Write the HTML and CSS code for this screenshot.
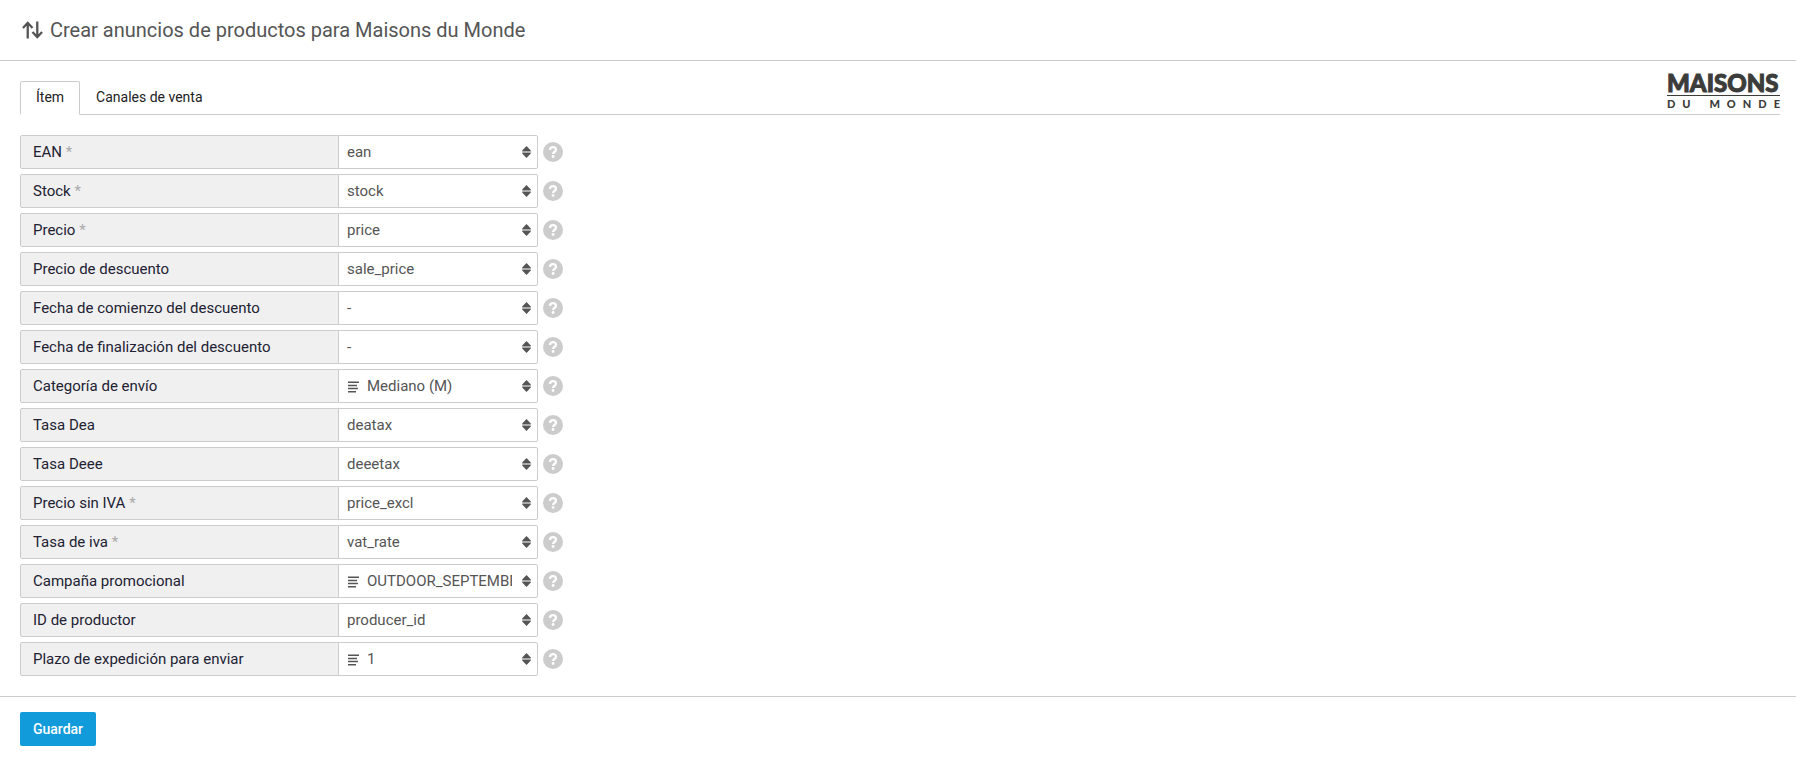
FILE: index.html
```html
<!DOCTYPE html>
<html lang="es">
<head>
    <meta charset="UTF-8">
    <meta name="viewport" content="width=device-width, initial-scale=1.0">
    <title>Crear anuncios de productos</title>
    <link rel="stylesheet" href="styles.css">
</head>
<body>

<!-- Shared icons -->
<svg class="sprite" aria-hidden="true">
    <symbol id="icon-sort" viewBox="0 0 9 12">
        <path d="M4.5 0 8.8 4.5V5.4H.2V4.5zM4.5 12 8.8 7.5V6.6H.2V7.5z"/>
    </symbol>
    <symbol id="icon-text" viewBox="0 0 12 12">
        <path d="M0 .6h11v1.5H0zM0 3.7h9v1.5H0zM0 6.8h10v1.5H0zM0 9.9h8v1.5H0z"/>
    </symbol>
    <symbol id="icon-help" viewBox="0 0 20 20">
        <circle cx="10" cy="10" r="10" fill="#ccc"/>
        <path d="M7 7.9C7 6.2 8.2 5.2 10 5.2s2.9 1 2.9 2.5c0 1.1-.6 1.6-1.5 2.3-.9.7-1.3 1-1.3 2.1" fill="none" stroke="#fff" stroke-width="2.3"/>
        <circle cx="10.1" cy="14.5" r="1.4" fill="#fff"/>
    </symbol>
</svg>

<header class="page-header">
    <svg class="header-icon" viewBox="0 0 22 20">
        <path d="M6 19V3M1 8l5-5.5L11 8M16 1v16M11 12l5 5.5L21 12" fill="none" stroke="#555" stroke-width="2.4"/>
    </svg>
    <h1>Crear anuncios de productos para Maisons du Monde</h1>
</header>

<main>
    <nav class="tabs">
        <a class="tab active" href="#item">Ítem</a>
        <a class="tab" href="#canales">Canales de venta</a>
        <div class="brand">
            <div class="brand-top">MAISONS</div>
            <div class="brand-bottom"><span>DU</span> <span>MONDE</span></div>
        </div>
    </nav>

    <form id="listing-form">
        <div class="field">
            <label for="ean">EAN <span class="required">*</span></label>
            <div class="select-box">
                <select id="ean"><option>ean</option></select>
                <svg class="sort"><use href="#icon-sort"/></svg>
            </div>
            <svg class="help"><use href="#icon-help"/></svg>
        </div>
        <div class="field">
            <label for="stock">Stock <span class="required">*</span></label>
            <div class="select-box">
                <select id="stock"><option>stock</option></select>
                <svg class="sort"><use href="#icon-sort"/></svg>
            </div>
            <svg class="help"><use href="#icon-help"/></svg>
        </div>
        <div class="field">
            <label for="price">Precio <span class="required">*</span></label>
            <div class="select-box">
                <select id="price"><option>price</option></select>
                <svg class="sort"><use href="#icon-sort"/></svg>
            </div>
            <svg class="help"><use href="#icon-help"/></svg>
        </div>
        <div class="field">
            <label for="sale-price">Precio de descuento</label>
            <div class="select-box">
                <select id="sale-price"><option>sale_price</option></select>
                <svg class="sort"><use href="#icon-sort"/></svg>
            </div>
            <svg class="help"><use href="#icon-help"/></svg>
        </div>
        <div class="field">
            <label for="sale-start">Fecha de comienzo del descuento</label>
            <div class="select-box">
                <select id="sale-start"><option>-</option></select>
                <svg class="sort"><use href="#icon-sort"/></svg>
            </div>
            <svg class="help"><use href="#icon-help"/></svg>
        </div>
        <div class="field">
            <label for="sale-end">Fecha de finalización del descuento</label>
            <div class="select-box">
                <select id="sale-end"><option>-</option></select>
                <svg class="sort"><use href="#icon-sort"/></svg>
            </div>
            <svg class="help"><use href="#icon-help"/></svg>
        </div>
        <div class="field">
            <label for="shipping">Categoría de envío</label>
            <div class="select-box fixed-value">
                <svg class="text-icon"><use href="#icon-text"/></svg>
                <select id="shipping"><option>Mediano (M)</option></select>
                <svg class="sort"><use href="#icon-sort"/></svg>
            </div>
            <svg class="help"><use href="#icon-help"/></svg>
        </div>
        <div class="field">
            <label for="deatax">Tasa Dea</label>
            <div class="select-box">
                <select id="deatax"><option>deatax</option></select>
                <svg class="sort"><use href="#icon-sort"/></svg>
            </div>
            <svg class="help"><use href="#icon-help"/></svg>
        </div>
        <div class="field">
            <label for="deeetax">Tasa Deee</label>
            <div class="select-box">
                <select id="deeetax"><option>deeetax</option></select>
                <svg class="sort"><use href="#icon-sort"/></svg>
            </div>
            <svg class="help"><use href="#icon-help"/></svg>
        </div>
        <div class="field">
            <label for="price-excl">Precio sin IVA <span class="required">*</span></label>
            <div class="select-box">
                <select id="price-excl"><option>price_excl</option></select>
                <svg class="sort"><use href="#icon-sort"/></svg>
            </div>
            <svg class="help"><use href="#icon-help"/></svg>
        </div>
        <div class="field">
            <label for="vat-rate">Tasa de iva <span class="required">*</span></label>
            <div class="select-box">
                <select id="vat-rate"><option>vat_rate</option></select>
                <svg class="sort"><use href="#icon-sort"/></svg>
            </div>
            <svg class="help"><use href="#icon-help"/></svg>
        </div>
        <div class="field">
            <label for="campaign">Campaña promocional</label>
            <div class="select-box fixed-value">
                <svg class="text-icon"><use href="#icon-text"/></svg>
                <select id="campaign"><option>OUTDOOR_SEPTEMBER</option></select>
                <svg class="sort"><use href="#icon-sort"/></svg>
            </div>
            <svg class="help"><use href="#icon-help"/></svg>
        </div>
        <div class="field">
            <label for="producer">ID de productor</label>
            <div class="select-box">
                <select id="producer"><option>producer_id</option></select>
                <svg class="sort"><use href="#icon-sort"/></svg>
            </div>
            <svg class="help"><use href="#icon-help"/></svg>
        </div>
        <div class="field">
            <label for="lead-time">Plazo de expedición para enviar</label>
            <div class="select-box fixed-value">
                <svg class="text-icon"><use href="#icon-text"/></svg>
                <select id="lead-time"><option>1</option></select>
                <svg class="sort"><use href="#icon-sort"/></svg>
            </div>
            <svg class="help"><use href="#icon-help"/></svg>
        </div>
    </form>
</main>

<footer>
    <button type="submit" form="listing-form">Guardar</button>
</footer>

</body>
</html>
```
FILE: styles.css
```css
* {
    box-sizing: border-box;
}

body {
    margin: 0;
    font-family: Roboto, sans-serif;
    font-size: 15px;
    color: #223;
    background-color: #fff;
}

.sprite {
    display: none;
}

.page-header {
    display: flex;
    align-items: center;
    gap: 7px;
    height: 61px;
    padding: 0 22px;
    border-bottom: 1px solid #ccc;
}

.header-icon {
    width: 21px;
    height: 20px;
}

.page-header h1 {
    margin: 0;
    font-size: 20px;
    font-weight: 400;
    color: #555;
}

main {
    padding: 0 16px 15px 20px;
}

.tabs {
    display: flex;
    align-items: flex-end;
    height: 54px;
    margin-bottom: 20px;
    border-bottom: 1px solid #ccc;
}

.tab {
    height: 34px;
    margin-bottom: -1px;
    padding: 0 15px;
    border: 1px solid transparent;
    border-radius: 2px 2px 0 0;
    font-size: 14px;
    line-height: 30px;
    color: #222;
    text-decoration: none;
}

.tab.active {
    border-color: #ccc;
    border-bottom-color: #fff;
    background-color: #fff;
}

/* Marketplace logo */
.brand {
    width: 113px;
    margin-left: auto;
    margin-bottom: 3px;
    font-family: Lato, sans-serif;
    font-weight: 900;
    color: #3c3c3b;
    -webkit-text-stroke: 1px #3c3c3b;
}

.brand-top {
    height: 24px;
    border-bottom: 1px solid #3c3c3b;
    font-size: 24px;
    line-height: 22px;
}

.brand-bottom {
    display: flex;
    justify-content: space-between;
    font-size: 11px;
    line-height: 15px;
    letter-spacing: 7px;
    -webkit-text-stroke-width: 0;
}

.brand-bottom span:last-child {
    margin-right: -7px;
}

.field {
    display: flex;
    align-items: center;
    margin-bottom: 5px;
}

.field label {
    width: 319px;
    height: 34px;
    padding: 0 12px;
    border: 1px solid #ccc;
    border-radius: 2px 0 0 2px;
    background-color: #f0f0f0;
    line-height: 32px;
}

.required {
    color: #aaa;
}

.select-box {
    position: relative;
    width: 200px;
    height: 34px;
    margin-left: -1px;
}

.select-box select {
    width: 100%;
    height: 34px;
    padding: 0 25px 0 8px;
    border: 1px solid #ccc;
    border-radius: 0 2px 2px 0;
    background-color: #fff;
    font-family: inherit;
    font-size: 15px;
    color: #555;
    appearance: none;
}

.select-box.fixed-value select {
    padding-left: 28px;
}

.sort {
    position: absolute;
    top: 11px;
    right: 7px;
    width: 9px;
    height: 12px;
    fill: #555;
    pointer-events: none;
}

.text-icon {
    position: absolute;
    top: 12px;
    left: 10px;
    width: 12px;
    height: 12px;
    fill: #555;
    pointer-events: none;
}

.help {
    width: 20px;
    height: 20px;
    margin-left: 5px;
}

footer {
    padding: 15px 20px 12px;
    border-top: 1px solid #ccc;
}

footer button {
    height: 34px;
    padding: 0 13px;
    border: none;
    border-radius: 2px;
    background-color: #119bdb;
    font-family: inherit;
    font-size: 14px;
    font-weight: 500;
    color: #fff;
    cursor: pointer;
}
```
